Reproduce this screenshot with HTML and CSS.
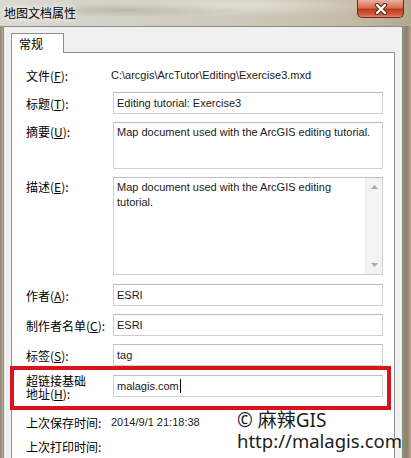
FILE: index.html
```html
<!DOCTYPE html>
<html lang="zh-CN">
<head>
    <meta charset="UTF-8">
    <title>地图文档属性</title>
    <link rel="stylesheet" href="styles.css">
</head>
<body>

<div class="window">
    <div class="titlebar">
        <span class="title">地图文档属性</span>
        <span class="close">
            <svg width="16" height="12" viewBox="0 0 16 12">
                <path d="M4 2 L12 10 M12 2 L4 10" stroke="#5a2a20" stroke-width="4.5" stroke-linecap="round"/>
                <path d="M4 2 L12 10 M12 2 L4 10" stroke="#ffffff" stroke-width="2.4" stroke-linecap="round"/>
            </svg>
        </span>
    </div>

    <div class="dialog">
        <div class="tabs">
            <div class="tab">常规</div>
        </div>
        <div class="pane">
            <div class="row row-file">
                <label>文件(<u>F</u>):</label>
                <span class="value">C:\arcgis\ArcTutor\Editing\Exercise3.mxd</span>
            </div>
            <div class="row">
                <label>标题(<u>T</u>):</label>
                <div class="input">Editing tutorial: Exercise3</div>
            </div>
            <div class="row row-top">
                <label>摘要(<u>U</u>):</label>
                <div class="input area area-small">Map document used with the ArcGIS editing tutorial.</div>
            </div>
            <div class="row row-top">
                <label>描述(<u>E</u>):</label>
                <div class="input area area-big">
                    <div class="area-text">Map document used with the ArcGIS editing tutorial.</div>
                    <div class="scrollbar">
                        <svg width="7" height="4" viewBox="0 0 7 4"><path d="M0 4 L3.5 0 L7 4 Z" fill="#a8a8a8"/></svg>
                        <svg width="7" height="4" viewBox="0 0 7 4"><path d="M0 0 L3.5 4 L7 0 Z" fill="#a8a8a8"/></svg>
                    </div>
                </div>
            </div>
            <div class="row">
                <label>作者(<u>A</u>):</label>
                <div class="input">ESRI</div>
            </div>
            <div class="row">
                <label>制作者名单(<u>C</u>):</label>
                <div class="input">ESRI</div>
            </div>
            <div class="row row-tag">
                <label>标签(<u>S</u>):</label>
                <div class="input">tag</div>
            </div>
            <div class="row highlight">
                <label class="two-lines">超链接基础<br>地址(<u>H</u>):</label>
                <div class="input">malagis.com<span class="caret"></span></div>
            </div>
            <div class="row row-info">
                <label>上次保存时间:</label>
                <span class="value">2014/9/1 21:18:38</span>
            </div>
            <div class="row row-info">
                <label>上次打印时间:</label>
                <span class="value"></span>
            </div>
            <div class="row row-info">
                <label>上次更新时间:</label>
                <span class="value"></span>
            </div>
        </div>
    </div>

    <!-- 水印 -->
    <div class="watermark">
        <div>© 麻辣GIS</div>
        <div class="watermark-url">http://malagis.com</div>
    </div>
</div>

</body>
</html>
```

FILE: styles.css
```css
body {
    margin: 0;
    width: 411px;
    height: 458px;
    overflow: hidden;
    font-family: "Noto Sans CJK SC", sans-serif;
    font-size: 12px;
    color: #000;
    background: linear-gradient(90deg, #8f846e 0px, #b5ad9c 3px, #c9c6bc 40%, #bdb7a6 70%, #a99c82 97%, #8e8068 99%, #b3a78f 100%);
}
.window {
    position: relative;
    height: 458px;
    overflow: hidden;
}
.titlebar {
    height: 26px;
    display: flex;
    justify-content: space-between;
    align-items: flex-start;
    background:
        radial-gradient(ellipse at 30% 40%, rgba(150, 140, 120, 0.35), transparent 30%),
        radial-gradient(ellipse at 60% 20%, rgba(245, 243, 236, 0.5), transparent 40%),
        linear-gradient(90deg, #d9d8d2 0%, #d3d0c6 30%, #cdc8ba 60%, #c4bba7 85%, #b4a88f 100%);
}
.title {
    padding: 5px 0 0 4px;
    line-height: 16px;
    text-shadow: 0 0 5px #fff, 0 0 8px #fff;
}
.close {
    width: 45px;
    height: 17px;
    margin-right: 7px;
    border: 1px solid #6b2a1e;
    border-top: none;
    border-radius: 0 0 5px 5px;
    background: linear-gradient(#e9b1a3 0%, #d96b52 45%, #c23a1f 55%, #cf5a3c 85%, #e48a6e 100%);
    display: flex;
    align-items: center;
    justify-content: center;
}
.dialog {
    margin: 0 8px 0 3px;
    height: 432px;
    border: 1px solid #8a8a85;
    border-bottom: none;
    background: #f0f0f0;
}
.tabs {
    display: flex;
    padding: 6px 0 0 7px;
}
.tab {
    width: 44px;
    height: 19px;
    padding-left: 7px;
    line-height: 19px;
    border: 1px solid #8e8f8f;
    border-bottom: none;
    background: #fff;
    margin-bottom: -1px;
    position: relative;
    z-index: 1;
}
.pane {
    margin: 0 7px;
    height: 400px;
    border: 1px solid #8e8f8f;
    border-bottom: none;
    background: #fff;
    padding: 11px 11px 0 14px;
}
.row {
    display: flex;
    align-items: center;
    margin-bottom: 8px;
}
.row label {
    width: 87px;
    flex-shrink: 0;
    white-space: nowrap;
}
.row-top {
    align-items: flex-start;
}
.row-top label {
    padding-top: 2px;
    line-height: 15px;
}
.row-file {
    height: 22px;
    margin-bottom: 6px;
}
.row-tag {
    margin-bottom: 0;
}
.value {
    font-family: "Liberation Sans", sans-serif;
    font-size: 11px;
    color: #1a1a1a;
    margin-left: -2px;
}
.input {
    flex: 1;
    height: 20px;
    line-height: 20px;
    padding-left: 3px;
    border: 1px solid #cfcfcf;
    border-top-color: #bdbdbd;
    background: #fff;
    font-family: "Liberation Sans", sans-serif;
    font-size: 11px;
    color: #1a1a1a;
}
.area {
    line-height: 15px;
    padding-top: 2px;
}
.area-small {
    height: 43px;
}
.area-big {
    height: 94px;
    display: flex;
    margin-bottom: 1px;
}
.area-text {
    flex: 1;
    padding-right: 4px;
}
.scrollbar {
    width: 16px;
    margin-top: -2px;
    border-left: 1px solid #ececec;
    background: #f3f3f3;
    display: flex;
    flex-direction: column;
    justify-content: space-between;
    align-items: center;
    padding: 7px 0 7px;
}
.highlight {
    margin: 0 -8px 0 -16px;
    padding: 5px 4px 6px 12px;
    border: 4px solid #d8141c;
    align-items: flex-start;
}
.two-lines {
    line-height: 13px;
    margin-top: -1px;
}
.caret {
    display: inline-block;
    width: 1px;
    height: 14px;
    margin-left: 1px;
    background: #000;
    vertical-align: -3px;
}
.row-info {
    height: 24px;
    margin-bottom: 0;
}
.watermark {
    position: absolute;
    left: 237px;
    top: 410px;
    color: #1c1c1c;
    font-family: "Noto Sans", "Noto Sans CJK SC", sans-serif;
    font-size: 19px;
    line-height: 21px;
}
.watermark-url {
    font-size: 18.5px;
    margin-top: -1px;
}
```
